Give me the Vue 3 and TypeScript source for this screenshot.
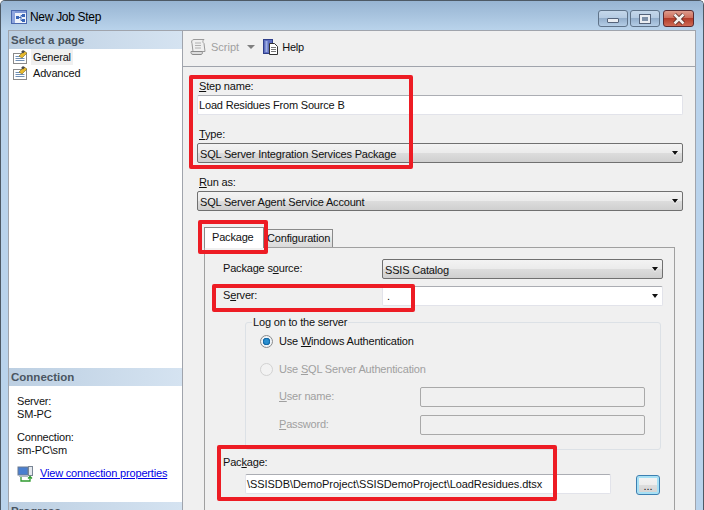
<script setup lang="ts">
const pages: string[] = ['General', 'Advanced']
</script>

<template>
  <div class="window">
    <header class="titlebar">
      <svg class="title-icon" width="18" height="18" viewBox="0 0 18 18">
        <rect x="1.500" y="2.500" width="15" height="13" fill="#eef2fa" stroke="#4a68ae" />
        <rect x="2" y="3" width="14" height="2" fill="#7f98d6" />
        <rect x="2" y="3" width="3" height="12" fill="#8ea5de" />
        <rect x="6" y="8" width="3" height="3" fill="#3a66b8" />
        <rect x="12" y="6" width="3" height="3" fill="#3a66b8" />
        <rect x="12" y="11" width="3" height="3" fill="#3a66b8" />
        <path d="M9 9.500h2M11 7.500v5M11 7.500h1M11 12.500h1" stroke="#3a66b8" fill="none" />
      </svg>
      <span class="title">New Job Step</span>
      <div class="controls">
        <span class="ctl"><i class="min-glyph"></i></span>
        <span class="ctl"><i class="max-glyph"></i></span>
        <span class="ctl close">
          <svg width="16" height="12" viewBox="0 0 16 12"><path d="M3.500 1.500l9 9M12.500 1.500l-9 9" stroke="#4a1f1a" stroke-width="4" /><path d="M3.500 1.500l9 9M12.500 1.500l-9 9" stroke="#f4f0ee" stroke-width="2.600" /></svg>
        </span>
      </div>
    </header>

    <div class="body">
      <aside class="side">
        <div class="side-head">Select a page</div>
        <ul class="pages">
          <li v-for="(p, i) in pages" :key="p" class="page">
            <svg width="17" height="16" viewBox="0 0 17 16">
              <rect x="1.500" y="4.500" width="13" height="10" fill="#fff" stroke="#8a8a8a" />
              <path d="M3.500 7.500h5M3.500 9.500h9M3.500 11.500h9" stroke="#6f8fb5" />
              <path d="M7 7l5-5 3 2-5 5z" fill="#e8b92c" stroke="#7a6a20" stroke-width=".6" />
              <path d="M9 3l2-2 2 1.500-2 2z" fill="#4a4a4a" />
            </svg>
            <span :class="['page-name', { sel: i === 0 }]">{{ p }}</span>
          </li>
        </ul>
        <div class="side-head">Connection</div>
        <div class="conn">
          <div>Server:</div>
          <div>SM-PC</div>
          <div class="conn-gap">Connection:</div>
          <div>sm-PC\sm</div>
          <div class="conn-link">
            <svg width="17" height="17" viewBox="0 0 17 17">
              <rect x="1" y="2" width="10" height="8" fill="#4a7fd0" stroke="#6a7a90" />
              <rect x="2" y="10" width="9" height="2" fill="#b0b8c4" />
              <rect x="11.500" y="1.500" width="4" height="9" fill="#e4e8ee" stroke="#7a8696" />
              <path d="M4 12v4h9v-4M11 13.500l2-2 2 2" stroke="#2f9a2f" stroke-width="1.300" fill="none" />
            </svg>
            <a class="link">View connection properties</a>
          </div>
        </div>
        <div class="side-head">Progress</div>
      </aside>

      <main class="main">
        <div class="toolbar">
          <svg class="tool-icon" width="17" height="18" viewBox="0 0 17 18">
            <path d="M4 1.500h10c-1.500 1-1.500 3 0 4l1 8H3l-1-8C1 3.500 2 1.500 4 1.500z" fill="#efefef" stroke="#9a9a9a" />
            <path d="M1 13.500h11c1 1.500 0 3-1 3H3c-1.500 0-2.500-1.500-2-3z" fill="#dcdcdc" stroke="#8a8a8a" />
            <path d="M5 5h6M5 7.500h6M5 10h6" stroke="#b0b0b0" />
          </svg>
          <span class="tool-off">Script</span>
          <i class="tool-arrow"></i>
          <svg class="help-icon" width="17" height="18" viewBox="0 0 17 18">
            <rect x="1.500" y="1.500" width="9" height="14" fill="#5f6fc0" stroke="#2f3f8a" />
            <rect x="3.500" y="3" width="2" height="11" fill="#9fb0e4" />
            <path d="M7.500 5.500h5l3 3v8h-8z" fill="#fff" stroke="#333" />
            <path d="M9 9.500h5M9 11.500h5M9 13.500h5" stroke="#777" />
          </svg>
          <span>Help</span>
        </div>

        <div class="form">
          <label class="lbl"><u>S</u>tep name:</label>
          <div class="input wide">Load Residues From Source B</div>

          <label class="lbl next"><u>T</u>ype:</label>
          <div class="select">SQL Server Integration Services Package<i class="arrow"></i></div>

          <label class="lbl next"><u>R</u>un as:</label>
          <div class="select">SQL Server Agent Service Account<i class="arrow"></i></div>

          <div class="tabs">
            <span class="tab active">Package</span>
            <span class="tab">Configuration</span>
          </div>
          <div class="pane">
            <div class="row">
              <span class="row-lbl">Package s<u>o</u>urce:</span>
              <div class="select short">SSIS Catalog<i class="arrow"></i></div>
            </div>
            <div class="row server">
              <span class="row-lbl">S<u>e</u>rver:</span>
              <div class="input short">.<i class="arrow"></i></div>
            </div>

            <div class="group">
              <span class="legend">Log on to the server</span>
              <div class="radio-row">
                <i class="radio on"></i><span>Use <u>W</u>indows Authentication</span>
              </div>
              <div class="radio-row off">
                <i class="radio"></i><span>Use <u>S</u>QL Server Authentication</span>
              </div>
              <div class="cred first">
                <span class="cred-lbl"><u>U</u>ser name:</span><span class="cred-in"></span>
              </div>
              <div class="cred">
                <span class="cred-lbl"><u>P</u>assword:</span><span class="cred-in"></span>
              </div>
            </div>

            <label class="lbl pkg">Pac<u>k</u>age:</label>
            <div class="pkg-row">
              <div class="input pkg-in">\SSISDB\DemoProject\SSISDemoProject\LoadResidues.dtsx</div>
              <button class="dots">...</button>
            </div>
          </div>
        </div>
      </main>
    </div>

    <div class="mark m1"></div>
    <div class="mark m2"></div>
    <div class="mark m3"></div>
    <div class="mark m4"></div>
  </div>
</template>

<style>
html, body { margin: 0; background: #fff; }
</style>

<style scoped>
.window {
  position: relative;
  box-sizing: border-box;
  width: 704px;
  height: 510px;
  overflow: hidden;
  border: 1px solid #4d5965;
  border-bottom: 0;
  border-radius: 5px 5px 0 0;
  background: #b9d3ec;
  font: 11px/16px "Liberation Sans", Arial, sans-serif;
  letter-spacing: -0.18px;
  color: #111;
}
.titlebar {
  display: flex;
  align-items: center;
  height: 29px;
  padding: 2px 8px 0 9px;
  box-sizing: border-box;
  background: linear-gradient(#97b4d2, #b9d3eb);
}
.title-icon { margin-right: 2px; }
.title { font-size: 12px; letter-spacing: -0.3px; color: #000; }
.controls { margin-left: auto; display: flex; gap: 2px; margin-right: 1px; align-self: flex-start; padding-top: 7px; }
.ctl {
  box-sizing: border-box;
  display: flex;
  align-items: center;
  justify-content: center;
  width: 30px;
  height: 17px;
  border: 1px solid #5f7389;
  border-radius: 3px;
  background: linear-gradient(#c4d7ea 0, #b5cbe2 45%, #93aecb 50%, #b4cde6 100%);
}
.close { width: 31px; margin-left: 1px; background: linear-gradient(#dd9b8c 0, #cf6f5d 45%, #b23c2a 50%, #cf6a55 100%); border-color: #5a2a30; }
.min-glyph { width: 10px; height: 3px; background: #e9edf2; border: 1px solid #54637a; border-radius: 1px; margin-top: 3px; }
.max-glyph { box-sizing: border-box; width: 10px; height: 8px; border: 2px solid #e9edf2; outline: 1px solid #54637a; background: #7d90a8; }

.body {
  display: flex;
  box-sizing: border-box;
  height: 480px;
  margin-left: 7px;
  width: 688px;
  border: 1px solid #a0a4ac;
  border-bottom: 0;
  background: #f0f0f0;
}
.side {
  box-sizing: border-box;
  flex: none;
  width: 174px;
  background: #fff;
  border-right: 1px solid #a0a4ac;
}
.side-head {
  height: 18px;
  line-height: 19px;
  padding-left: 2px;
  font-weight: bold;
  font-size: 11.500px;
  letter-spacing: 0;
  color: #4a5561;
  background: linear-gradient(90deg, #bccfe2, #d5e3f1);
}
.pages { list-style: none; margin: 0; padding: 0; height: 319px; }
.page { display: flex; align-items: center; height: 16px; padding-left: 3px; color: #111; }
.page svg { flex: none; margin-right: 2px; }
.page-name { padding: 0 2px 0 2px; height: 16px; }
.sel { background: #f0f0f0; }
.conn { height: 116px; box-sizing: border-box; padding: 9px 0 0 8px; line-height: 13px; }
.conn-gap { margin-top: 10px; }
.conn-link { display: flex; align-items: center; margin-top: 8px; height: 17px; }
.link { color: #0000e6; text-decoration: underline; margin-left: 6px; }

.main { flex: 1; min-width: 0; }
.toolbar {
  display: flex;
  align-items: center;
  box-sizing: border-box;
  height: 36px;
  border-bottom: 1px solid #a0a4ac;
  padding: 0 0 4px 7px;
}
.tool-off { color: #a0a0a0; margin-left: 4px; letter-spacing: 0; }
.tool-arrow { width: 0; height: 0; margin: 1px 0 0 8px; border: 4px solid transparent; border-top-color: #7f7f7f; border-bottom: 0; }
.help-icon { margin: 0 3px 0 7px; }

.form { padding: 11px 12px 0 14px; }
.lbl { display: block; height: 16px; margin-left: 2px; margin-bottom: 1px; }
.lbl.next { margin-top: 11px; margin-bottom: 1px; }
.input, .select {
  position: relative;
  box-sizing: border-box;
  height: 20px;
  line-height: 20px;
  padding-left: 2px;
  border-radius: 2px;
}
.input {
  line-height: 18px;
  padding-left: 1px;
  background: #fff;
  border: 1px solid #e2e3ea;
  border-top-color: #abadb3;
}
.select {
  border: 1px solid #707070;
  background: linear-gradient(#f3f3f3 0, #ebebeb 48%, #dddddd 50%, #cfcfcf 100%);
}
.arrow {
  position: absolute;
  right: 4px;
  top: 7px;
  width: 0;
  height: 0;
  border: 3.500px solid transparent;
  border-top: 4px solid #111;
  border-bottom: 0;
  filter: drop-shadow(0 1px 0 #fff);
}
.tabs { display: flex; align-items: flex-end; height: 20px; margin: 16px 0 0 7px; }
.tab {
  box-sizing: border-box;
  width: 69px;
  height: 18px;
  line-height: 17px;
  padding: 0 3px;
  background: linear-gradient(#f4f4f4, #dadada);
  border: 1px solid #8a8a8a;
  border-bottom: 0;
  border-left: 0;
}
.tab.active {
  position: relative;
  z-index: 1;
  height: 21px;
  width: 60px;
  margin-bottom: -1px;
  padding-left: 7px;
  line-height: 19px;
  background: #fff;
  border-left: 1px solid #8a8a8a;
}
.pane {
  box-sizing: border-box;
  height: 300px;
  margin-left: 7px;
  width: 471px;
  border: 1px solid #a0a0a0;
  padding: 11px 0 0 18px;
}
.row { display: flex; align-items: center; }
.row.server { margin-top: 7px; }
.row-lbl { width: 159px; flex: none; margin-bottom: 2px; }
.short { width: 281px; flex: none; }
.input.short { padding-left: 4px; }
.group {
  position: relative;
  box-sizing: border-box;
  width: 416px;
  height: 128px;
  margin: 16px 0 0 22px;
  padding: 10px 0 0 14px;
  border: 1px solid #dce1e6;
  border-radius: 3px;
}
.legend { position: absolute; left: 6px; top: -9px; padding: 0 1px; background: #f0f0f0; }
.radio-row { display: flex; align-items: center; height: 16px; margin-bottom: 12px; }
.radio-row span { margin-left: 6px; }
.radio-row.off { color: #a0a0a0; }
.radio {
  box-sizing: border-box;
  width: 13px;
  height: 13px;
  border-radius: 50%;
  border: 1px solid #d2d2d2;
  background: #f2f2f2;
  flex: none;
}
.radio.on { border-color: #8b8b8b; background: radial-gradient(circle, #2a8fd0 0 2px, #0b5f9c 3.500px, #eef2f6 4px); }
.cred { display: flex; align-items: center; height: 20px; padding-left: 19px; color: #a0a0a0; }
.cred.first { margin-top: -2px; margin-bottom: 8px; }
.cred-lbl { width: 141px; flex: none; margin-bottom: 2px; }
.cred-in { box-sizing: border-box; width: 225px; height: 20px; border: 1px solid #a9a9a9; border-radius: 2px; }
.lbl.pkg { margin: 4px 0 4px 0; }
.pkg-row { display: flex; margin-left: 22px; }
.pkg-in { width: 366px; flex: none; letter-spacing: -0.06px; }
.dots {
  box-sizing: border-box;
  width: 24px;
  height: 20px;
  margin: 1px 0 0 25px;
  padding: 2px 0 0;
  border: 1px solid #3c7fb1;
  border-radius: 3px;
  box-shadow: inset 0 0 0 2px #a6e0f5;
  background: linear-gradient(#f4f4f4 0, #ededed 48%, #ddd 50%, #d2d2d2 100%);
  font: 11px/16px "Liberation Sans", Arial, sans-serif;
  color: #111;
}
.mark {
  position: absolute;
  box-sizing: border-box;
  border: 4px solid #ed1c24;
  border-radius: 2px;
}
.m1 { left: 188px; top: 74px; width: 224px; height: 94px; }
.m2 { left: 197px; top: 219px; width: 70px; height: 34px; }
.m3 { left: 211px; top: 283px; width: 203px; height: 28px; }
.m4 { left: 216px; top: 444px; width: 340px; height: 56px; }
</style>
